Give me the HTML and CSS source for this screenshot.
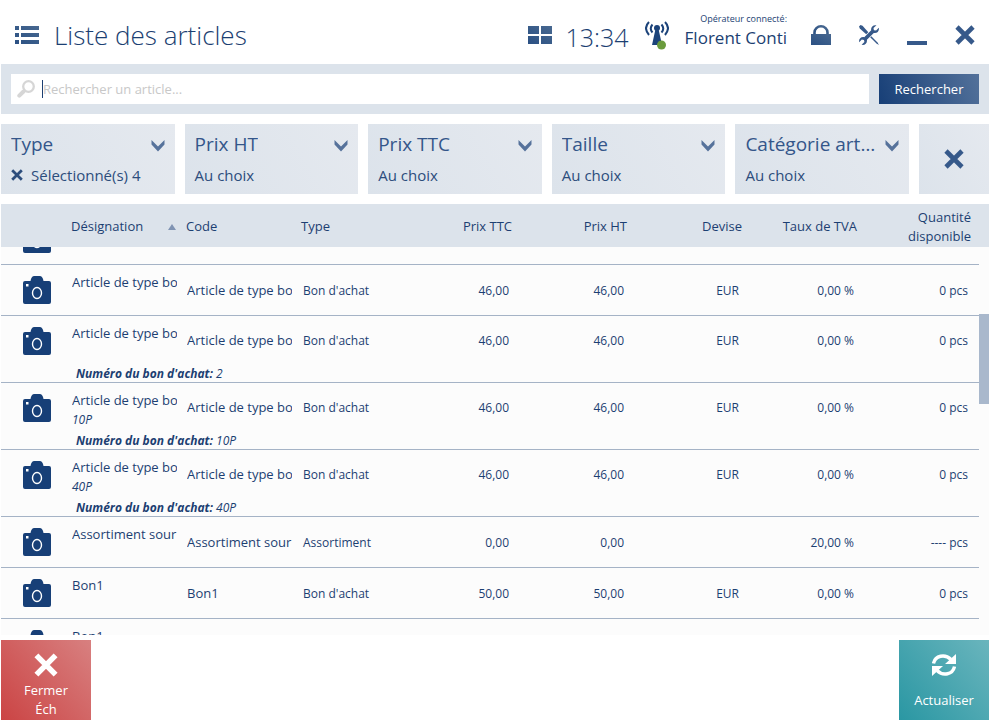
FILE: index.html
```html
<!DOCTYPE html>
<html lang="fr">
<head>
  <meta charset="UTF-8">
  <title>Liste des articles</title>
  <meta name="viewport" content="width=device-width, initial-scale=1.0">
  <link rel="stylesheet" href="styles.css">
</head>
<body>
  <!-- Shared icons -->
  <svg class="sprite" aria-hidden="true">
    <defs>
      <linearGradient id="ink" x1="0" y1="1" x2="1" y2="0">
        <stop offset="0" stop-color="#2a5083" />
        <stop offset="1" stop-color="#486890" />
      </linearGradient>
    </defs>
    <symbol id="camera" viewBox="0 0 28 28">
      <path fill="#173f77" d="M2 5h5.500C8 2 9 0 11.500 0h5C19 0 20 2 20.500 5H26q2 0 2 2v19q0 2-2 2H2q-2 0-2-2V7q0-2 2-2z" />
      <path fill="#fff" d="M3 8h2.500v2.500H3z" />
      <ellipse cx="14" cy="17" rx="4.500" ry="5.500" fill="none" stroke="#fff" stroke-width="1.400" />
    </symbol>
    <symbol id="cross" viewBox="0 0 20 20">
      <path fill="none" stroke="currentColor" stroke-width="4.600" d="M2 2l16 16M18 2L2 18" />
    </symbol>
    <symbol id="chevron" viewBox="0 0 14 12">
      <path fill="currentColor" d="M.5 0L7 6.500 13.500 0v4.500L7 11.500.5 4.500z" />
    </symbol>
  </svg>

  <header class="topbar">
    <svg class="list-icon" viewBox="0 0 24 18" fill="url(#ink)" aria-hidden="true">
      <path d="M0 0h4v4H0zM6 0h18v4H6zM0 7h4v4H0zM6 7h18v4H6zM0 14h4v4H0zM6 14h18v4H6z" />
    </svg>
    <h1>Liste des articles</h1>
    <button class="icon-btn tiles" aria-label="Menu">
      <svg width="24" height="18" viewBox="0 0 24 18" fill="url(#ink)"><path d="M0 0h11v8H0zM13 0h11v8H13zM0 10h11v8H0zM13 10h11v8H13z" /></svg>
    </button>
    <time class="clock">13:34</time>
    <svg class="antenna" viewBox="0 0 24 29" aria-hidden="true">
      <g fill="none" stroke="#1c437a" stroke-width="2">
        <path d="M4 1Q-2 7 4 14M7.500 3.500Q4 7.500 7.500 11.500M20 1Q26 7 20 14M16.500 3.500Q20 7.500 16.500 11.500" />
      </g>
      <circle cx="12" cy="7" r="3" fill="#1c437a" />
      <path fill="#1c437a" d="M10.500 8h3L17 24H7z" />
      <circle cx="16.500" cy="24" r="4.500" fill="#6a9b3c" />
    </svg>
    <div class="operator">
      <small>Opérateur connecté:</small>
      <span>Florent Conti</span>
    </div>
    <nav class="window-tools">
      <button class="icon-btn" aria-label="Verrouiller">
        <svg width="20" height="20" viewBox="0 0 20 20"><path fill="none" stroke="url(#ink)" stroke-width="2.600" d="M3.500 10V7.500a6.500 6.200 0 0 1 13 0V10" /><path fill="url(#ink)" d="M0 9h20v11H0z" /></svg>
      </button>
      <button class="icon-btn" aria-label="Outils">
        <svg width="20" height="20" viewBox="0 0 20 20" fill="#36598a">
          <path d="M17.500.3L14.500 3l.4 2.200 2.200.4L19.800 2.800C20.600 6 18 8.600 14.800 7.900L7.900 14.800C8.500 18 5.800 20.600 2.600 19.800L5.400 17l-.4-2.100-2.200-.4L.2 17.300C-.6 14 2 11.500 5.200 12.200L12.200 5.200C11.500 2 14.200-.5 17.500.3z" />
          <path d="M0 1.500L1.500 0 3.500.8 9.300 7.200 7.200 9.300.8 3.500z" />
          <path d="M11.200 12.300l1.100-1.100 6.200 6.300 1.500 2.500-2.500-1.500z" />
        </svg>
      </button>
      <button class="icon-btn" aria-label="Réduire">
        <svg width="20" height="20" viewBox="0 0 20 20"><path fill="#36598a" d="M0 16h20v4H0z" /></svg>
      </button>
      <button class="icon-btn" aria-label="Fermer la fenêtre">
        <svg width="20" height="20"><use href="#cross" /></svg>
      </button>
    </nav>
  </header>

  <form class="search" role="search">
    <div class="search-box">
      <svg width="18" height="18" viewBox="0 0 18 18" aria-hidden="true">
        <circle cx="11.500" cy="6.500" r="5.300" fill="none" stroke="#d6d6d6" stroke-width="2.300" />
        <path stroke="#d6d6d6" stroke-width="4" stroke-linecap="round" d="M2.300 15.700L6.500 11.500" />
      </svg>
      <span class="caret"></span>
      <input type="text" aria-label="Rechercher un article" placeholder="Rechercher un article...">
    </div>
    <button class="search-btn" type="button">Rechercher</button>
  </form>

  <section class="filters">
    <button class="filter">
      <span class="filter-name"><span>Type</span><svg width="14" height="12"><use href="#chevron" /></svg></span>
      <span class="filter-value"><svg width="12" height="12"><use href="#cross" /></svg>Sélectionné(s) 4</span>
    </button>
    <button class="filter">
      <span class="filter-name"><span>Prix HT</span><svg width="14" height="12"><use href="#chevron" /></svg></span>
      <span class="filter-value">Au choix</span>
    </button>
    <button class="filter">
      <span class="filter-name"><span>Prix TTC</span><svg width="14" height="12"><use href="#chevron" /></svg></span>
      <span class="filter-value">Au choix</span>
    </button>
    <button class="filter">
      <span class="filter-name"><span>Taille</span><svg width="14" height="12"><use href="#chevron" /></svg></span>
      <span class="filter-value">Au choix</span>
    </button>
    <button class="filter">
      <span class="filter-name"><span>Catégorie article</span><svg width="14" height="12"><use href="#chevron" /></svg></span>
      <span class="filter-value">Au choix</span>
    </button>
    <button class="filter-clear" aria-label="Effacer les filtres">
      <svg width="20" height="20"><use href="#cross" /></svg>
    </button>
  </section>

  <main class="list">
    <div class="list-scroll" id="list-scroll">
      <table>
        <colgroup>
          <col class="c-photo"><col class="c-std"><col class="c-std"><col class="c-type">
          <col class="c-std"><col class="c-std"><col class="c-std"><col class="c-std"><col>
        </colgroup>
        <thead>
          <tr>
            <th></th>
            <th><span class="sorted">Désignation <svg width="8" height="6" viewBox="0 0 8 6"><path fill="#8094b3" d="M4 0l4 6H0z" /></svg></span></th>
            <th>Code</th>
            <th>Type</th>
            <th class="num">Prix TTC</th>
            <th class="num">Prix HT</th>
            <th class="num">Devise</th>
            <th class="num">Taux de TVA</th>
            <th class="num">Quantité disponible</th>
          </tr>
        </thead>
        <tbody>
          <tr>
            <td class="photo"><svg width="28" height="28"><use href="#camera" /></svg></td>
            <td></td><td></td><td></td><td></td><td></td><td></td><td></td><td></td>
          </tr>
          <tr>
            <td class="photo"><svg width="28" height="28"><use href="#camera" /></svg></td>
            <td class="name"><div>Article de type bon</div></td>
            <td class="code"><div>Article de type bon</div></td>
            <td class="type">Bon d'achat</td>
            <td class="num">46,00</td>
            <td class="num">46,00</td>
            <td class="num">EUR</td>
            <td class="num">0,00 %</td>
            <td class="num">0 pcs</td>
          </tr>
          <tr class="has-note">
            <td class="photo"><svg width="28" height="28"><use href="#camera" /></svg></td>
            <td class="name"><div>Article de type bon</div></td>
            <td class="code"><div>Article de type bon</div></td>
            <td class="type">Bon d'achat</td>
            <td class="num">46,00</td>
            <td class="num">46,00</td>
            <td class="num">EUR</td>
            <td class="num">0,00 %</td>
            <td class="num">0 pcs</td>
          </tr>
          <tr class="note"><td></td><td colspan="8"><b>Numéro du bon d'achat:</b> 2</td></tr>
          <tr class="has-note">
            <td class="photo"><svg width="28" height="28"><use href="#camera" /></svg></td>
            <td class="name"><div>Article de type bon</div><em>10P</em></td>
            <td class="code"><div>Article de type bon</div></td>
            <td class="type">Bon d'achat</td>
            <td class="num">46,00</td>
            <td class="num">46,00</td>
            <td class="num">EUR</td>
            <td class="num">0,00 %</td>
            <td class="num">0 pcs</td>
          </tr>
          <tr class="note"><td></td><td colspan="8"><b>Numéro du bon d'achat:</b> 10P</td></tr>
          <tr class="has-note">
            <td class="photo"><svg width="28" height="28"><use href="#camera" /></svg></td>
            <td class="name"><div>Article de type bon</div><em>40P</em></td>
            <td class="code"><div>Article de type bon</div></td>
            <td class="type">Bon d'achat</td>
            <td class="num">46,00</td>
            <td class="num">46,00</td>
            <td class="num">EUR</td>
            <td class="num">0,00 %</td>
            <td class="num">0 pcs</td>
          </tr>
          <tr class="note"><td></td><td colspan="8"><b>Numéro du bon d'achat:</b> 40P</td></tr>
          <tr>
            <td class="photo"><svg width="28" height="28"><use href="#camera" /></svg></td>
            <td class="name"><div>Assortiment sour</div></td>
            <td class="code"><div>Assortiment sour</div></td>
            <td class="type">Assortiment</td>
            <td class="num">0,00</td>
            <td class="num">0,00</td>
            <td class="num"></td>
            <td class="num">20,00 %</td>
            <td class="num">---- pcs</td>
          </tr>
          <tr>
            <td class="photo"><svg width="28" height="28"><use href="#camera" /></svg></td>
            <td class="name"><div>Bon1</div></td>
            <td class="code"><div>Bon1</div></td>
            <td class="type">Bon d'achat</td>
            <td class="num">50,00</td>
            <td class="num">50,00</td>
            <td class="num">EUR</td>
            <td class="num">0,00 %</td>
            <td class="num">0 pcs</td>
          </tr>
          <tr>
            <td class="photo"><svg width="28" height="28"><use href="#camera" /></svg></td>
            <td class="name"><div>Bon1</div></td>
            <td></td><td></td><td></td><td></td><td></td><td></td><td></td>
          </tr>
        </tbody>
      </table>
    </div>
    <div class="scrollbar">
      <div class="scroll-cap"></div>
      <div class="scroll-thumb"></div>
    </div>
  </main>

  <footer class="actions">
    <button class="action close">
      <svg width="24" height="24"><use href="#cross" /></svg>
      <span>Fermer<br>Éch</span>
    </button>
    <button class="action refresh">
      <svg width="24" height="24" viewBox="0 0 24 24" fill="none" stroke="#fff" stroke-width="3.400">
        <path d="M1.500 10.500C3 2.500 13 .5 19 6.500M22.500 13.500C21 21.500 11 23.500 5 17.500" />
        <path fill="#fff" stroke="none" d="M24 1v10H13zM0 23V13h11z" />
      </svg>
      <span>Actualiser</span>
    </button>
  </footer>

  <script>
    // The list opens one row down, the header stays in place
    document.getElementById("list-scroll").scrollTop = 33;
  </script>
</body>
</html>
```
FILE: styles.css
```css
:root {
  --ink: #1c3f72;
  --icon: #36598a;
  --bar: #dce3eb;
  --line: #a5b3c6;
}

* {
  margin: 0;
  padding: 0;
  box-sizing: border-box;
}

body {
  height: 100vh;
  min-height: 480px;
  padding: 0 10px 7px 1px;
  display: flex;
  flex-direction: column;
  background: #fff;
  color: var(--ink);
  font-family: "Open Sans", "Noto Sans", sans-serif;
  font-size: 13px;
}

button {
  border: none;
  background: none;
  color: inherit;
  font: inherit;
  cursor: pointer;
}
svg {
  display: block;
  flex-shrink: 0;
}
.sprite {
  position: absolute;
  width: 0;
  height: 0;
}

/* Top bar */
.topbar {
  height: 64px;
  padding: 6px 14px 0;
  display: flex;
  align-items: center;
  flex-shrink: 0;
}
.list-icon {
  width: 24px;
  height: 18px;
  margin-right: 15px;
}
.topbar h1 {
  flex-grow: 1;
  font-size: 26px;
  font-weight: 300;
  white-space: nowrap;
}
.icon-btn {
  color: var(--icon);
}
.clock {
  margin: 4px 16px 0 14px;
  font-size: 25px;
  font-weight: 300;
}
.antenna {
  width: 24px;
  height: 29px;
  margin-right: 16px;
}
.operator {
  display: flex;
  flex-direction: column;
  align-items: flex-end;
  padding-bottom: 8px;
}
.operator small {
  font-size: 9px;
  line-height: 14px;
}
.operator span {
  font-size: 17px;
  line-height: 24px;
}
.window-tools {
  display: flex;
  gap: 28px;
  margin-left: 24px;
}

/* Search */
.search {
  padding: 10px;
  display: flex;
  gap: 10px;
  flex-shrink: 0;
  background: var(--bar);
}
.search-box {
  flex-grow: 1;
  height: 30px;
  padding: 0 6px;
  display: flex;
  align-items: center;
  background: #fff;
}
.search-box input {
  flex-grow: 1;
  border: none;
  outline: none;
  background: transparent;
  color: var(--ink);
  font: inherit;
}
.search-box input::placeholder {
  color: #c8c8c8;
}
.caret {
  width: 1px;
  height: 18px;
  margin-left: 7px;
  background: var(--ink);
}
.search-btn {
  width: 100px;
  background: linear-gradient(70deg, #173f77, #53719a);
  color: #fff;
}

/* Filters */
.filters {
  margin: 10px 0;
  display: grid;
  grid-template-columns: repeat(5, minmax(0, 1fr)) 70px;
  gap: 10px;
  flex-shrink: 0;
}
.filter,
.filter-clear {
  height: 70px;
  background: linear-gradient(60deg, #dce3eb, #e5e9ef);
}
.filter {
  padding: 7px 10px;
  display: flex;
  flex-direction: column;
  gap: 6px;
  text-align: left;
}
.filter-name {
  width: 100%;
  display: flex;
  align-items: center;
  justify-content: space-between;
  gap: 8px;
  font-size: 19px;
  line-height: 26px;
  color: #34568a;
}
.filter-name span {
  overflow: hidden;
  text-overflow: ellipsis;
  white-space: nowrap;
}
.filter-name svg {
  margin-top: 4px;
  color: #56729b;
}
.filter-value {
  display: flex;
  align-items: center;
  gap: 8px;
  font-size: 15px;
  line-height: 24px;
  color: #2c4d7c;
}
.filter-clear {
  display: grid;
  place-items: center;
  color: var(--icon);
}

/* Article list */
.list {
  flex: 1 1 0;
  min-height: 0;
  display: flex;
  background: #fcfcfc;
}
.list-scroll {
  flex-grow: 1;
  overflow-y: auto;
  scrollbar-width: none;
}
table {
  width: 100%;
  table-layout: fixed;
  border-spacing: 0;
}
.c-photo {
  width: 65px;
}
.c-std {
  width: 115px;
}
.c-type {
  width: 106px;
}
th {
  position: sticky;
  top: 0;
  height: 43px;
  padding: 2px 5px 0;
  background: var(--bar);
  font-weight: 400;
  line-height: 19px;
  text-align: left;
}
.sorted {
  display: flex;
  align-items: center;
  justify-content: space-between;
}
td {
  height: 51px;
  border-bottom: 1px solid var(--line);
  font-size: 12px;
}
.num {
  text-align: right;
}
td.num {
  padding-right: 8px;
}
th.num:last-child {
  padding-right: 8px;
}
td.num:last-child {
  padding-right: 11px;
}
.photo {
  padding-left: 22px;
}
.name,
.code {
  padding: 0 4px 0 6px;
  font-size: 13px;
  line-height: 19px;
}
.name {
  padding-top: 8px;
  vertical-align: top;
}
.name div,
.code div {
  overflow: hidden;
  white-space: nowrap;
}
.name em {
  display: block;
  font-size: 12px;
}
.type {
  padding-left: 7px;
}
.has-note td {
  height: 49px;
  border-bottom: none;
}
.note td {
  height: 18px;
  padding: 1px 0 0 10px;
  font-style: italic;
  line-height: 16px;
}
.scrollbar {
  width: 10px;
  flex-shrink: 0;
}
.scroll-cap {
  height: 43px;
  background: var(--bar);
}
.scroll-thumb {
  height: 90px;
  margin-top: 67px;
  background: #a9b8cc;
}

/* Bottom actions */
.actions {
  margin-top: 5px;
  display: flex;
  justify-content: space-between;
  flex-shrink: 0;
}
.action {
  width: 90px;
  height: 80px;
  display: flex;
  flex-direction: column;
  align-items: center;
  color: #fff;
  line-height: 19px;
}
.close {
  padding-top: 13px;
  gap: 4px;
  background: linear-gradient(50deg, #cb4444, #d88080);
}
.refresh {
  padding-top: 13px;
  gap: 14px;
  background: linear-gradient(50deg, #2a97a3, #6ab5bd);
}
```
